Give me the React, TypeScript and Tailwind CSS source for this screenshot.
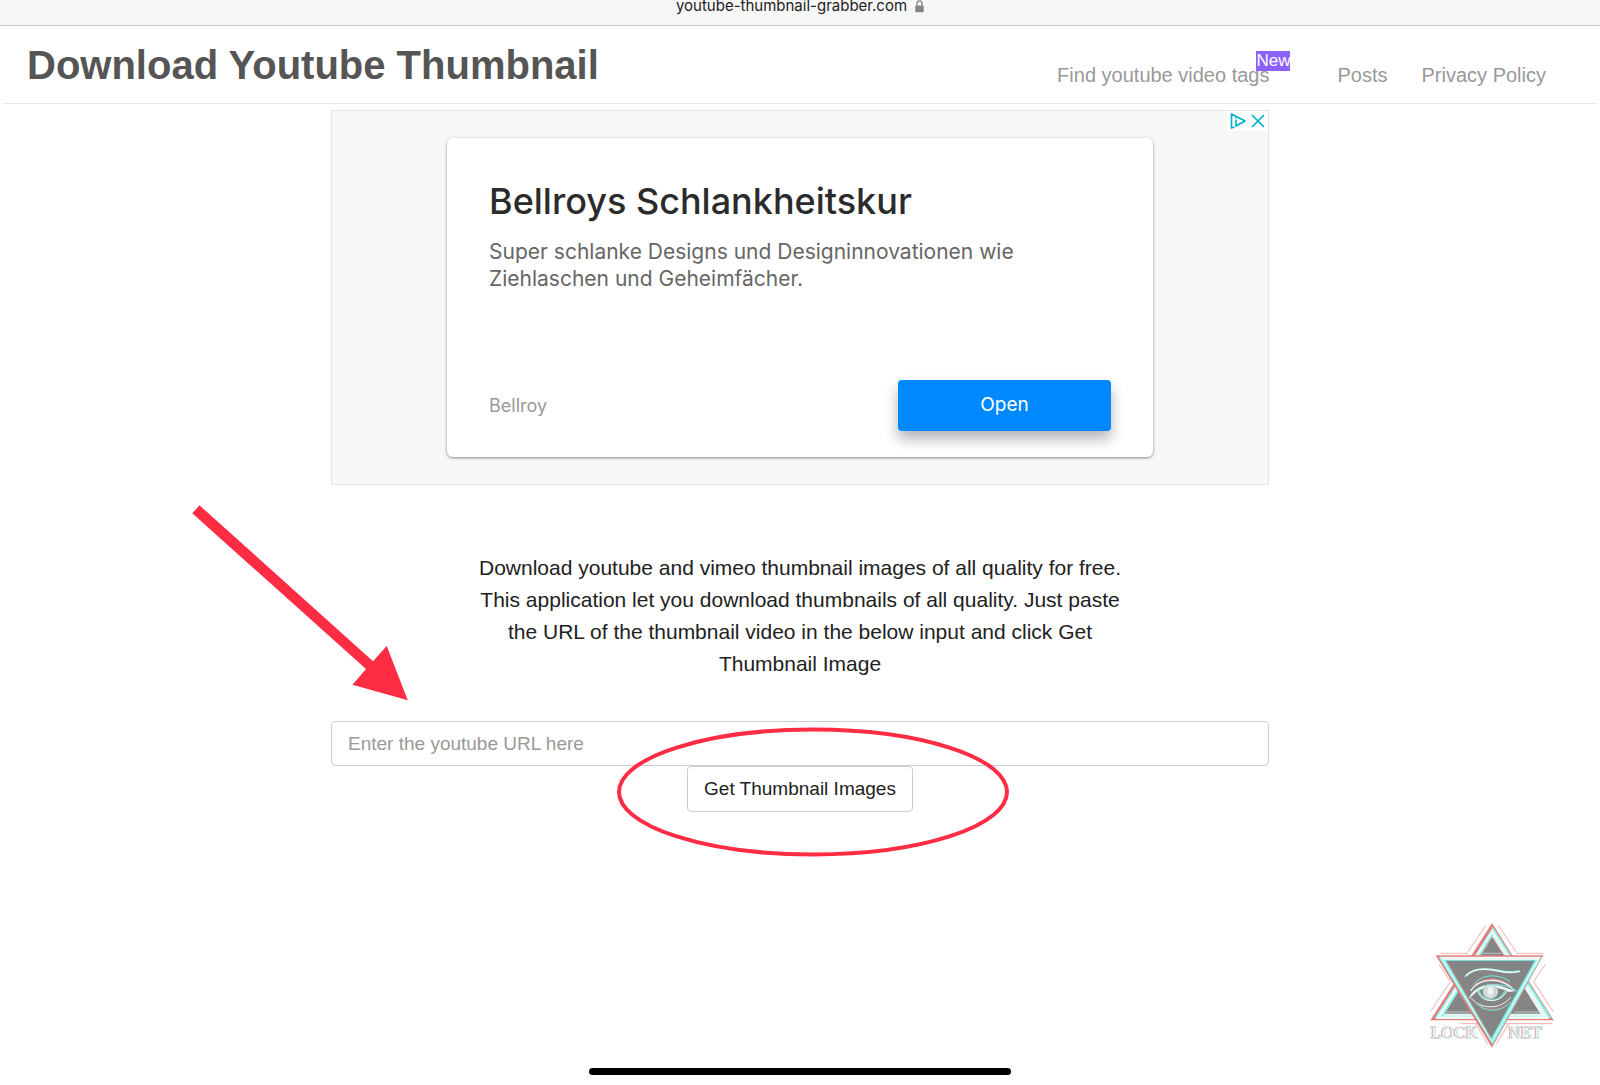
const navLinks = [
  { label: 'Find youtube video tags', href: '#tags', isNew: true },
  { label: 'Posts', href: '#posts' },
  { label: 'Privacy Policy', href: '#privacy' },
];

function AddressBar() {
  return (
    <div className="flex h-[26px] items-start justify-center gap-2 border-b border-[#c4c6c6] bg-[#f7f7f7]">
      <span className="-mt-1 font-['Inter',sans-serif] text-[15px] leading-5 text-[#1c1c1c]">
        youtube-thumbnail-grabber.com
      </span>
      <svg viewBox="0 0 9 13" className="h-[13px] w-[9px]" aria-hidden="true">
        <path d="M2 6V3.6a2.5 2.7 0 0 1 5 0V6" fill="none" stroke="#858589" strokeWidth="1.3" />
        <rect x="0.3" y="5.4" width="8.4" height="6.8" rx="1" fill="#858589" />
      </svg>
    </div>
  );
}

function Header() {
  return (
    <header className="mx-[3px] flex h-[78px] items-start justify-between border-b border-[#e7e7e7] pl-6 pr-[51px]">
      <h1 className="pt-4 text-[40px] font-bold leading-[46px] text-[#555]">
        Download Youtube Thumbnail
      </h1>
      <nav className="flex gap-[34px] pt-[37px] text-xl leading-6 text-[#999]">
        {navLinks.map((link) => (
          <a key={link.label} href={link.href} className="relative first:mr-[34px]">
            {link.label}
            {link.isNew && (
              <span className="absolute -right-[21px] -top-3 bg-[#8c62ff] text-[17px] leading-5 text-white">
                New
              </span>
            )}
          </a>
        ))}
      </nav>
    </header>
  );
}

function AdBanner() {
  return (
    <section className="relative mt-1.5 border border-[#e4e4e4] bg-[#f7f7f7] px-[115px] py-[27px]">
      {/* AdChoices corner */}
      <div className="absolute right-0 top-0 flex h-5 items-center gap-1 bg-white px-[3px]">
        <svg viewBox="0 0 17 16" className="h-4 w-[17px]" fill="none" stroke="#00aecd" aria-hidden="true">
          <path d="M4.5 14L1.5 15V1L15 8L6 13V6.5" strokeWidth="1.6" strokeLinejoin="round" />
          <path d="M6 3.8v1.4" strokeWidth="1.6" />
        </svg>
        <button type="button" aria-label="Close ad" className="size-[14px]">
          <svg viewBox="0 0 14 14" fill="none" stroke="#00aecd" strokeWidth="1.7">
            <path d="M1 1l12 12M13 1L1 13" />
          </svg>
        </button>
      </div>

      <div className="flex h-[319px] flex-col rounded-md bg-white px-[42px] pb-[26px] pt-10 font-['Inter',sans-serif] shadow-[0_1px_3px_rgba(0,0,0,0.45)]">
        <h2 className="text-4xl font-medium leading-[46px] text-[#2b2b2b]">
          Bellroys Schlankheitskur
        </h2>
        <p className="mt-3.5 max-w-[560px] text-[21px] leading-[27px] text-[#666]">
          Super schlanke Designs und Designinnovationen wie Ziehlaschen und Geheimfächer.
        </p>
        <div className="mt-auto flex items-center justify-between">
          <span className="text-lg text-[#999]">Bellroy</span>
          <button
            type="button"
            className="h-[51px] w-[213px] rounded bg-[#0088ff] text-[19px] text-white shadow-[0_8px_14px_rgba(0,0,30,0.3)]"
          >
            Open
          </button>
        </div>
      </div>
    </section>
  );
}

function ThumbnailForm() {
  return (
    <form className="relative mt-[41px] flex flex-col items-center text-[19px]">
      <label htmlFor="video-url" className="sr-only">
        Youtube URL
      </label>
      <input
        id="video-url"
        type="text"
        placeholder="Enter the youtube URL here"
        className="h-[45px] w-full rounded border border-[#ccc] px-4 placeholder:text-[#999]"
      />
      <button
        type="button"
        className="h-[46px] rounded border border-[#ccc] bg-white px-4 text-[#212121]"
      >
        Get Thumbnail Images
      </button>

      {/* Arrow pointing at the input */}
      <svg
        viewBox="192 505 216 196"
        className="pointer-events-none absolute -left-[139px] -top-[216px] h-[196px] w-[216px]"
        aria-hidden="true"
      >
        <path
          d="M192.3 513.3L199.5 505.3L373 661.3L386.7 646L407.8 700.2L352.5 684.7L366 669Z"
          fill="#ff2d43"
        />
      </svg>

      {/* Ring around the button */}
      <svg
        viewBox="0 0 392 130"
        className="pointer-events-none absolute left-[286px] top-1.5 h-[130px] w-[392px]"
        fill="none"
        aria-hidden="true"
      >
        <ellipse cx="196" cy="65" rx="194" ry="62.5" stroke="#ff2d43" strokeWidth="4" />
      </svg>
    </form>
  );
}

function LocknetLogo() {
  return (
    <svg
      viewBox="88 63 378 378"
      className="mr-[45px] size-[126px] self-end overflow-visible"
      fill="none"
      role="img"
      aria-label="Locknet"
    >
      {/* Faint outer strokes */}
      <g stroke="#e67c7c" strokeWidth="3" opacity="0.6">
        <path d="M258 73L203 155M296 73L351 155M122 157H205M350 157H431" />
        <path d="M118 190L152 242L92 332M437 190L402 242L461 332" />
        <path d="M183 368H238M318 368H458M228 368L264 430M326 368L290 430" />
      </g>

      {/* Upward triangle */}
      <path d="M277 66L462 358H92Z" fill="#e67c7c" />
      <path d="M280 78L455 351H105Z" fill="#7ff5ee" />
      <path d="M278 84L449 354H108Z" fill="#edf8f4" />
      <path d="M277 98L427 346H124Z" fill="#7ff5ee" />
      <path d="M279 104L431 344H132Z" fill="#edf8f4" />
      <path d="M278 108L422 338H135Z" fill="#858585" />
      <path d="M240 166L277 108L315 166" stroke="#e67c7c" strokeWidth="2" />
      <path d="M248 157H306M136 333H210M344 333H420" stroke="#b9c7c4" strokeWidth="3" />

      {/* Downward triangle */}
      <path d="M108 163H431L277 440Z" fill="#e67c7c" />
      <path d="M117 168H426L279 431Z" fill="#7ff5ee" />
      <path d="M121 167H423L277 424Z" fill="#edf8f4" />
      <path d="M131 177H412L277 420Z" fill="#7ff5ee" />
      <path d="M139 179H405L275 412Z" fill="#858585" />
      <path d="M145 184L275 411" stroke="#e67c7c" strokeWidth="2" />

      {/* Eye */}
      <g strokeLinecap="round">
        <path d="M197 226C219 202 256 199 296 208S344 212 358 210" stroke="#75e9e2" strokeWidth="5" />
        <path d="M200 223C222 202 256 201 296 210S344 214 360 211" stroke="#f2faf7" strokeWidth="4" />
        <path d="M222 250C247 217 298 218 330 241" stroke="#75e9e2" strokeWidth="3" />
        <path d="M218 260C246 226 304 223 338 260" stroke="#e67c7c" strokeWidth="3" />
        <path d="M214 268C239 230 301 227 340 264" stroke="#edf8f4" strokeWidth="4" />
        <path d="M209 291C225 250 292 235 350 269" stroke="#75e9e2" strokeWidth="3" />
        <path
          d="M207 293C216 271 239 252 274 251C303 250 323 264 350 270L326 273C307 259 247 252 224 279Z"
          fill="#edf8f4"
        />
        <path d="M238 267C241 299 296 314 316 270" stroke="#75e9e2" strokeWidth="4" />
        <path d="M234 268C239 305 301 313 322 270" stroke="#edf8f4" strokeWidth="3" />
        <circle cx="272" cy="272" r="22" fill="#d7e8e4" stroke="#9cc9c5" strokeWidth="3" />
        <path d="M257 261v16a15 14 0 0 0 30 0v-16" stroke="#e9a3a3" strokeWidth="2" />
        <path d="M264 259v16a8 8 0 0 0 16 0v-16" fill="#edf8f4" stroke="#c4d3d0" strokeWidth="2" />
        <path d="M214 291C241 325 302 329 333 289" stroke="#edf8f4" strokeWidth="3" />
        <path d="M224 298C248 332 300 334 334 298" stroke="#e67c7c" strokeWidth="2" />
        <path d="M229 305C252 334 300 336 331 306" stroke="#75e9e2" strokeWidth="3" />
      </g>

      <g
        className="font-['Liberation_Serif',serif] text-[52px] [filter:drop-shadow(-3px_0_0_#efa5a5)_drop-shadow(2px_0_0_#9cf3ee)]"
        fill="#fafffd"
        stroke="#c9c9c9"
        strokeWidth="1"
      >
        <text x="94" y="411">LOCK</text>
        <text x="326" y="411">NET</text>
      </g>
    </svg>
  );
}

export default function App() {
  return (
    <div className="flex min-h-screen flex-col bg-white font-['Liberation_Sans',sans-serif]">
      <AddressBar />
      <Header />
      <main className="mx-auto w-full max-w-[938px]">
        <AdBanner />
        <p className="mx-auto mt-[67px] max-w-[670px] text-center text-[21px] leading-8 text-[#212121]">
          Download youtube and vimeo thumbnail images of all quality for free. This application let
          you download thumbnails of all quality. Just paste the URL of the thumbnail video in the
          below input and click Get Thumbnail Image
        </p>
        <ThumbnailForm />
      </main>
      <footer className="mt-auto flex flex-col items-center pb-2.5">
        <LocknetLogo />
        {/* Home indicator */}
        <div className="mt-5 h-[7px] w-[422px] rounded-full bg-black" />
      </footer>
    </div>
  );
}
